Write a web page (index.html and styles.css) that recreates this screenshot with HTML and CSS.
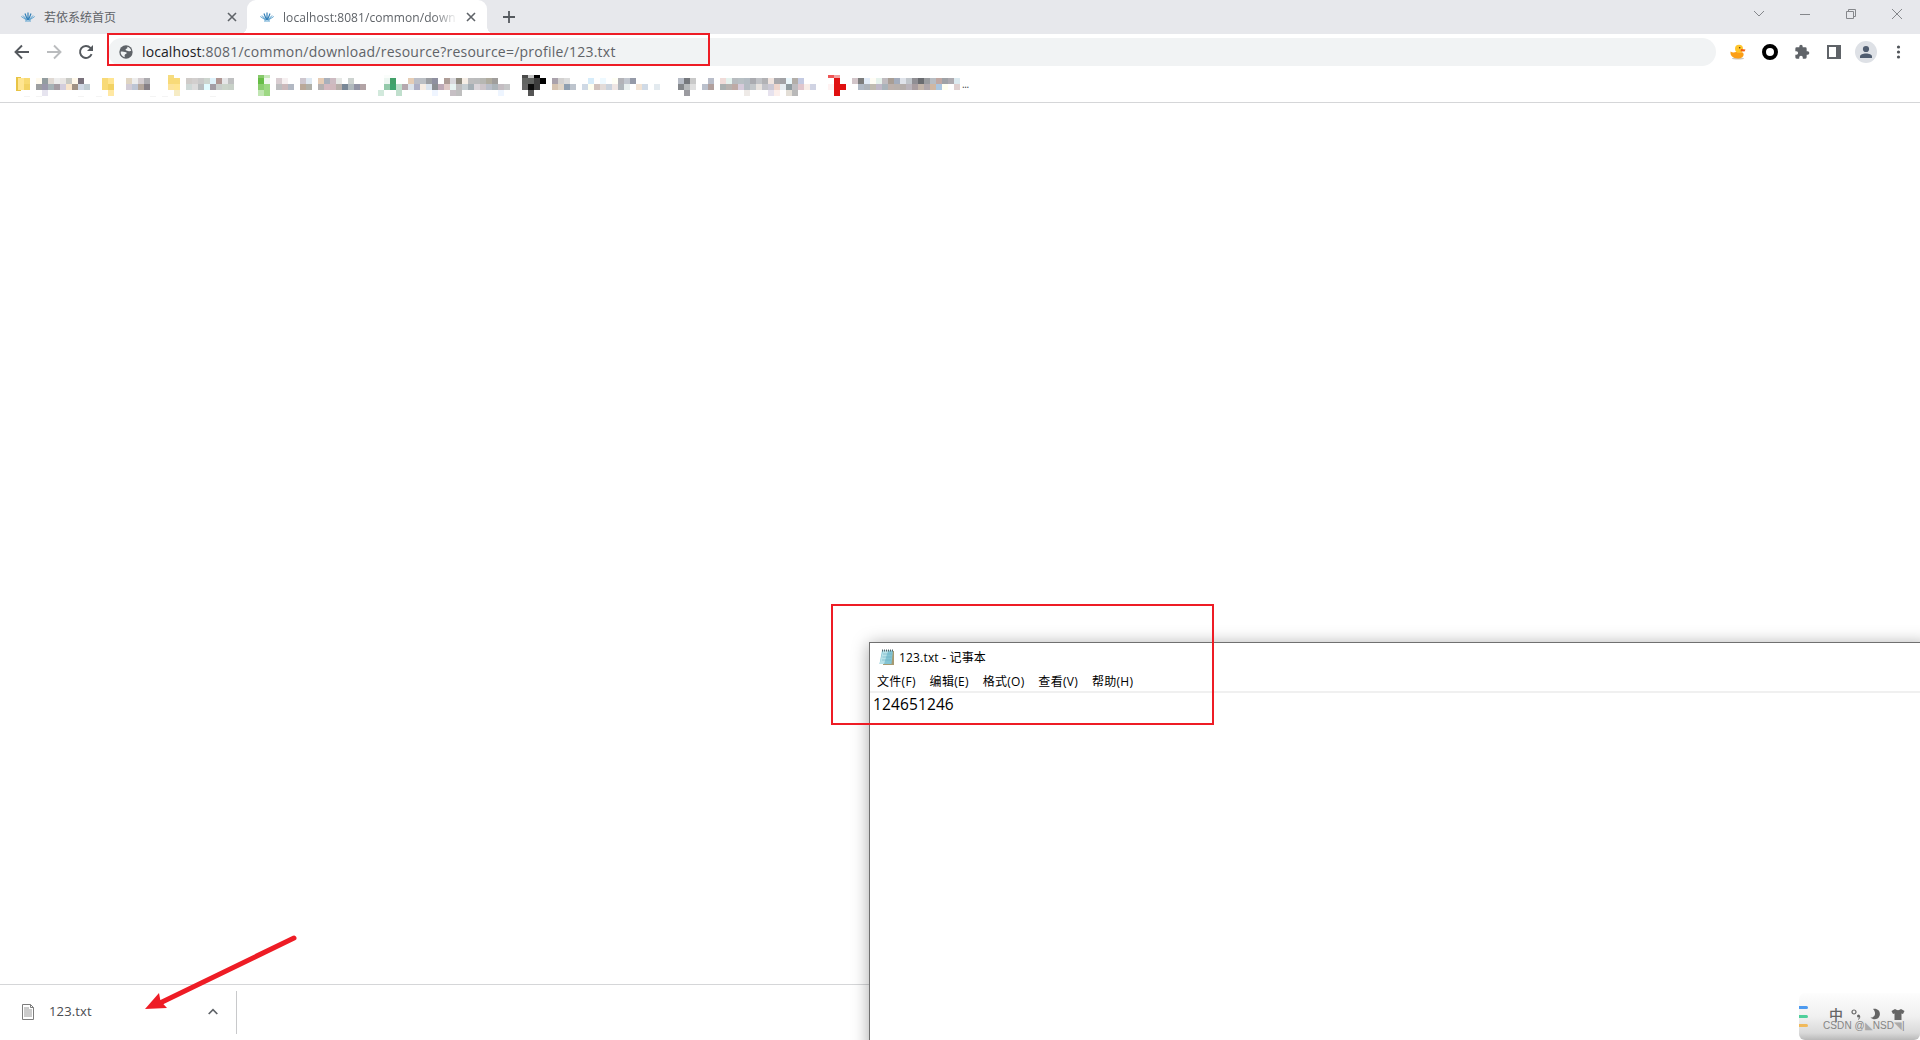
FILE: index.html
```html
<!DOCTYPE html>
<html lang="zh-CN">
<head>
  <meta charset="UTF-8" />
  <title>localhost:8081/common/download</title>
  <link rel="stylesheet" href="styles.css">
</head>
<body>
  <svg class="defs">
    <symbol id="lotus" viewBox="0 0 14 10">
      <path d="M7 .5V8M4 1.500L6.500 8M10 1.500L7.500 8" stroke="#3580b8" stroke-width="1.200"/>
      <path d="M.3 4.500L6 8.300M13.700 4.500L8 8.300M2 3.500l4 4.500M12 3.500L8 8M4 9h6" stroke="#5da2cf"/>
    </symbol>
    <symbol id="close" viewBox="0 0 10 10">
      <path d="M1 1l8 8M9 1L1 9" stroke="#5f6368" stroke-width="1.600"/>
    </symbol>
  </svg>

  <header class="tabs">
    <div class="tab">
      <svg class="favicon"><use href="#lotus"/></svg>
      <span class="tab-title">若依系统首页</span>
      <svg class="close"><use href="#close"/></svg>
    </div>
    <div class="tab active">
      <svg class="favicon"><use href="#lotus"/></svg>
      <span class="tab-title">localhost:8081/common/down</span>
      <svg class="close"><use href="#close"/></svg>
    </div>
    <svg class="new-tab" viewBox="0 0 12 12"><path d="M6 0v12M0 6h12" stroke="#55595e" stroke-width="1.800"/></svg>
    <div class="window-buttons">
      <svg viewBox="0 0 12 12"><path d="M1 3l5 5 5-5"/></svg>
      <svg viewBox="0 0 12 12"><path d="M1 6.500h10"/></svg>
      <svg viewBox="0 0 12 12"><path d="M1.500 3.500h7v7h-7zM3.500 3.500v-2h7v7h-2"/></svg>
      <svg viewBox="0 0 12 12"><path d="M1 1l10 10M11 1L1 11"/></svg>
    </div>
  </header>

  <div class="toolbar">
    <svg class="nav" viewBox="0 0 16 16"><path d="M15 8H2M8 1.500L1.500 8 8 14.500" stroke="#55595e"/></svg>
    <svg class="nav" viewBox="0 0 16 16"><path d="M1 8h13M8 1.500L14.500 8 8 14.500" stroke="#babcbe"/></svg>
    <svg class="nav" viewBox="0 0 16 16"><path d="M13.600 10.200A6 6 0 1 1 12.400 3.800L14 5.500" stroke="#55595e"/><path d="M15 1v6H9z" fill="#55595e"/></svg>
    <div class="omnibox">
      <svg class="globe" viewBox="0 0 24 24"><circle cx="12" cy="12" r="10" fill="#5f6368"/><path fill="#f1f3f4" d="M4 11.500c2.500-.5 4.500 0 6.500.5 2 .3 3 .8 2.500 2-.7 1.500-2.500 1-3 2.500-.3 1.200.3 2 0 3.200C6.500 19 3.700 15.500 4 11.500zM14 4.300c3 .8 5.200 3 5.800 6-1.500 1-3.300.8-4.800.2-1.500-.8-3.500-.5-3.700-2 0-1.500 2.200-1.200 2.700-2.200z"/></svg>
      <span class="url"><b>localhost</b>:8081/common/download/resource?resource=/profile/123.txt</span>
    </div>
    <div class="extensions">
      <svg viewBox="0 0 16 16"><ellipse cx="8" cy="14.500" rx="6" ry="1" fill="#cfc8bd"/><path fill="#fb9e16" d="M.5 7.500c2 1.500 4 1 5.500.5l6 .2c3 1 2 6-3.500 6.200C3 14.600 0 12 .5 7.500z"/><circle cx="9" cy="4.700" r="4" fill="#ffc52b"/><path fill="#f25e12" d="M11 5l4.500.5-1 2-4-.3z"/><circle cx="9.700" cy="3.700" r=".8" fill="#553516"/></svg>
      <svg viewBox="0 0 16 16"><circle cx="8" cy="8" r="6" fill="none" stroke="#000" stroke-width="4"/></svg>
      <svg viewBox="0 0 24 24"><path fill="#5f6368" d="M20.500 11H19V7a2 2 0 0 0-2-2h-4V3.500a2.500 2.500 0 0 0-5 0V5H4a2 2 0 0 0-2 2v3.800h1.500a2.700 2.700 0 0 1 0 5.400H2V20a2 2 0 0 0 2 2h3.800v-1.500a2.700 2.700 0 0 1 5.400 0V22H17a2 2 0 0 0 2-2v-4h1.500a2.500 2.500 0 0 0 0-5z"/></svg>
      <svg viewBox="0 0 16 16"><path fill="#5f6368" fill-rule="evenodd" d="M1 1h14v14H1zM3 3v10h7V3z"/></svg>
      <svg class="avatar" viewBox="0 0 22 22"><circle cx="11" cy="11" r="11" fill="#dee1e6"/><circle cx="11" cy="8" r="3.100" fill="#505d70"/><path fill="#505d70" d="M5 17v-1.500c0-4 12-4 12 0V17z"/></svg>
      <svg viewBox="0 0 16 16"><g fill="#505459"><circle cx="8.500" cy="3" r="1.600"/><circle cx="8.500" cy="8" r="1.600"/><circle cx="8.500" cy="13" r="1.600"/></g></svg>
    </div>
  </div>

  <div class="bookmarks">
    <svg id="bookmarkBar" class="mosaic" viewBox="0 72 960 25" shape-rendering="crispEdges"></svg>
    <span class="more">...</span>
  </div>

  <main class="page"></main>

  <footer class="downloads">
    <div class="download-item">
      <svg class="file" viewBox="0 0 12 16"><path d="M.5.5h8l3 3v12H.5zM8.500.5v3h3" fill="#fff" stroke="#7c7c7c"/><path d="M2 4h5M2 6h8M2 8h8M2 10h8M2 12h8" stroke="#8c8c8c" stroke-width=".9"/></svg>
      <span class="file-name">123.txt</span>
      <svg class="chevron" viewBox="0 0 10 7"><path d="M.7 6L5 1.700 9.300 6" fill="none" stroke="#5f6368" stroke-width="1.700"/></svg>
    </div>
  </footer>

  <section class="notepad">
    <div class="notepad-title">
      <svg viewBox="0 0 16 17"><path d="M4 2h11v14H4z" fill="#a69a72"/><path d="M3 1.500h11l-1.500 13.500H.5z" fill="#83c4d3"/><path d="M4 2h5L5 15H.5z" fill="#b9e2e9"/><path d="M4 5h9M3.500 8h9M3 11h9" stroke="#68afc2" stroke-width=".6"/><path d="M3 1.500h11" stroke="#54676c" stroke-width="2" stroke-dasharray="1 1"/></svg>
      <span>123.txt - 记事本</span>
    </div>
    <nav class="menu">
      <span>文件(F)</span><span>编辑(E)</span><span>格式(O)</span><span>查看(V)</span><span>帮助(H)</span>
    </nav>
    <div class="editor">124651246</div>
  </section>

  <div class="ime">
    <div class="stripes"><i class="blue"></i><i class="green"></i><i class="yellow"></i></div>
    <div class="ime-icons">
      <span class="lang">中</span>
      <svg viewBox="0 0 14 14"><circle cx="5" cy="5" r="2" fill="none" stroke="#666" stroke-width="1.200"/><circle cx="9.500" cy="9" r="1.500" fill="#666"/><path d="M10.700 9c.2 2-.5 3-1.700 3.500" fill="none" stroke="#666"/></svg>
      <svg viewBox="0 0 14 14"><path fill="#666" d="M5 2c5-1 8 3 6.500 7-1.300 3.500-6 4.500-9 1.500C7.500 11 8.500 5.500 5 2z"/></svg>
      <svg viewBox="0 0 14 14"><path fill="#666" d="M4 2c1.500 1.500 4.500 1.500 6 0l3.500 2-1.500 3-1.500-.5V13h-7V6.500L2 7 .5 4z"/></svg>
    </div>
    <span class="watermark">CSDN @<i>◣</i>NSD<i>◥</i>|</span>
  </div>

  <div class="mark mark-url"></div>
  <div class="mark mark-file"></div>
  <svg class="arrow" viewBox="0 0 160 84"><path d="M149 8L15 73" stroke="#ee1c25" stroke-width="5" stroke-linecap="round"/><path fill="#ee1c25" d="M0 79l14-16 1.500 8 6.500 7z"/></svg>

  <script>
    // [x, y, colours of consecutive 6px cells]
    const cells = [
      [18, 78, 'ffe591 f8da72'], [18, 84, 'ffe591 f2d264'],
      [36, 78, 'fffaee 939da0 e0d9d3 ededed e9e6e4 c8c9c4 fff8ea 7a727c'],
      [36, 84, '9d9fa1 9a98aa a6b2b6 a49ca3 d3cddc f9e5cb a09183 d0d8e4 c0ccd2'],
      [42, 90, 'e6e4ef'],
      [102, 78, 'f8da78 ffe591'], [102, 84, 'f8da78 f2d264'], [108, 90, 'ffe8a3'],
      [126, 78, 'e0d5c2 ededed d4cdd0 adacb0'], [126, 84, 'd2ccd6 bdc5d4 b4a79c 868086'],
      [168, 72, 'f5dc80'], [168, 78, 'f8da78 f8da78'], [168, 84, 'fde39a ffe591'], [174, 90, 'f6ecc5'],
      [186, 78, 'cfcbc8 d2cfce c9c9c9 cdd5cf dff2fb b09794 e6e6e8 bfc0c1'],
      [186, 84, 'ced8d6 dcdcdc b8bcbe e1fbff a29ca4 c8cdcb cbd4ca c8d1c8'],
      [258, 72, '87c96b c8e8bc'], [258, 78, '66bd45 f0f7ee'], [258, 84, '8bce6f 9dd883'], [258, 90, 'c0e5b2 9dd883'],
      [276, 78, 'd9cdd1 f6f0f1'], [276, 84, 'bdbdbf cbb9bb b2b8c3'],
      [300, 78, 'cec7cf dfe9f2'], [300, 84, 'b9a898 b0b0a8'],
      [318, 78, 'e6ccb5 a9b0bb cdbbc2 e6e8e6 - cdd3d0'],
      [318, 84, 'b5b1b0 d3b8bf d0b8bd b7aea9 788796 b0b9bd 9294a5 b2a3a5'],
      [384, 72, 'fafdfb fafdfb'], [384, 78, 'ecf6f1 42a069'], [384, 84, '93c9aa 3fa46e c0dfcd'], [378, 90, 'd2e9dc - - c0dfcd'],
      [408, 78, 'e5cdb6 bcbfc8 bbbfc4 9c9ea2 8f90a0 - ae9d97 d8d8dc 8f8c81 f6eee6 bdbdbe bbbcbd b7b7b3 b0ac9f a09e9c'],
      [402, 84, 'b5a8ae dde4eb aeb0c6 f7ede4 dce5ef 8c8f93 bda9b6 dfc9c6 e6f3f1 bdbdbe c6ced2 a5afb5 dad5da cdc5ca b9bec9 acb4b9 c4bdc2 c6c7c8'],
      [432, 90, 'eff5ff - - c6bfc4 bfbfbf - - - - - - eef5ff'],
      [522, 72, '4a4a4a c5c5c5 000'], [522, 78, '626462 5f615f 3c3c3c 000'], [522, 84, '666 0a0a0a 3c3c3c'], [528, 90, '555'],
      [552, 78, 'aaa2ac d3d1d0 dcdcdc - - - d6ecfa - eef9ff - fffff5 b3b3b8 c2c7cf 959aa8'],
      [552, 84, 'd6c4b2 e0d5c7 8f9fb0 bdc4cd - cfd9e5 fffff0 d1c3be e3dbd8 cbd3dd efe6e3 b0b6bb e9f0ef - f2e3d4 d0dae6 - e3eaef'],
      [678, 78, 'b7bcc6 75787d c9c9c9'], [678, 84, '84878b b6b9bb dfdfdf'], [684, 90, '9b9ba0'],
      [708, 78, 'b9bdc9'], [702, 84, 'bac0cc b1a09d'],
      [720, 78, 'f0dcd9 e5f2ee b8bcc0 b8c0c4 b4bcc3 aaabb0 c1c3c7 b2b2b5 f0e4df a9a8ac a2a2a6 eaf7fc b3aea9 c4cae2'],
      [720, 84, 'aab0b0 b7b2af beaaa5 d6cbdb b5bcc3 c3c7ca e8e3df c3c3c9 cbc8d4 efd5cc e6edf2 8f9ba0 bdbcc0 e0c6cc f8ede7 d0d3e3'],
      [744, 90, 'eeeae7 - - - e6e2ee fcefeb - e3ded6 b9b9b9'],
      [828, 72, 'ef5555 f4a0a0'], [834, 78, 'e01010'], [828, 84, 'fff2f2 e01010 e01010'], [834, 90, 'e01010'],
      [852, 78, 'd2c5c9 7c7c7c e2ecf8 fffdf5 e6f2ec c0bcc0 a99e95 a4adbd dfe3ea c1c6cb 908f94 6a6c70 9a9ca0 b8bdc3 c0a8a2 9fa2a6 adaaaf dceaf0'],
      [858, 84, 'b0b9c5 aeb4bb c0bbb0 c0b9c8 a9b3ba bdb1ac b9b1ad b5aeab bab4bb a89da0 c2b4a9 b0a7ab d0b7a2 abc6df fffff0 - dfd0d0'],
      [24, 96, 'f4f4f4 - f4f4f4 - - - - - - f4f4f4 - - f4f4f4 - - - - - - - - f4f4f4 - f4f4f4 - - - - - - - f4f4f4']
    ];

    let rects = '<path fill="#e8c445" d="M16 77h5v1h-3v12h3v1h-5z"/>';
    cells.forEach(([x, y, row]) => {
      row.split(' ').forEach((color, i) => {
        if (color === '-') return;
        const top = Math.max(y, 75);
        rects += `<rect x="${x + i * 6}" y="${top}" width="6" height="${y + 6 - top}" fill="#${color}"/>`;
      });
    });
    document.getElementById('bookmarkBar').innerHTML = rects;
  </script>
</body>
</html>
```
FILE: styles.css
```css
* { margin: 0; padding: 0; box-sizing: border-box; }

body {
  width: 1920px;
  height: 1040px;
  display: flex;
  flex-direction: column;
  position: relative;
  overflow: hidden;
  background: #fff;
  color: #5f6368;
  font-family: "Open Sans", "Noto Sans CJK SC", sans-serif;
  font-size: 12px;
}

svg { display: block; flex: none; fill: none; }
.defs { position: absolute; width: 0; height: 0; }

/* tab strip */
.tabs { display: flex; height: 34px; flex: none; background: #e7e8ec; }

.tab {
  display: flex;
  align-items: center;
  width: 240px;
  padding: 0 11px 0 14px;
}

.tab:first-child { width: 247px; padding: 0 10px 0 21px; }

.tab.active {
  position: relative;
  background: #fff;
  border-radius: 9px 9px 0 0;
  padding-left: 13px;
}

/* curved feet of the active tab */
.tab.active::before,
.tab.active::after {
  content: "";
  position: absolute;
  bottom: 0;
  width: 7px;
  height: 7px;
}

.tab.active::before { left: -7px; background: radial-gradient(circle at 0 0, transparent 6.5px, #fff 7px); }
.tab.active::after { right: -7px; background: radial-gradient(circle at 100% 0, transparent 6.5px, #fff 7px); }

.favicon { width: 14px; height: 10px; margin-right: 9px; }

.tab-title { flex: 1; white-space: nowrap; overflow: hidden; }

.active .tab-title {
  margin-right: 8px;
  letter-spacing: 0.08px;
  -webkit-mask-image: linear-gradient(to right, #000 86%, transparent);
  mask-image: linear-gradient(to right, #000 86%, transparent);
}

.close { width: 10px; height: 10px; }
.new-tab { width: 12px; height: 12px; margin: 11px 0 0 16px; }

.window-buttons { display: flex; gap: 34px; margin: 8px 17px 0 auto; }
.window-buttons svg { width: 12px; height: 12px; stroke: #85878b; }

/* address bar */
.toolbar {
  display: flex;
  align-items: center;
  height: 36px;
  flex: none;
  padding-left: 14px;
}

.nav { width: 16px; height: 16px; margin-right: 16px; stroke-width: 1.900; }

.omnibox {
  display: flex;
  align-items: center;
  width: 1608px;
  height: 28px;
  margin-left: -2px;
  padding-left: 10px;
  border-radius: 14px;
  background: #f1f3f4;
}

.globe { width: 16px; height: 16px; margin-right: 8px; }
.url { padding-bottom: 2px; font-size: 14px; letter-spacing: 0.24px; white-space: nowrap; }
.url b { font-weight: normal; letter-spacing: 0.1px; color: #202124; }

.extensions { display: flex; align-items: center; gap: 16px; margin-left: 14px; }
.extensions svg { width: 16px; height: 16px; }
.extensions .avatar { width: 22px; height: 22px; margin: 0 -3px; }

/* bookmarks */
.bookmarks {
  display: flex;
  height: 33px;
  flex: none;
  padding-top: 2px;
  border-bottom: 1px solid #d5d6d8;
}

.mosaic { width: 960px; height: 25px; }
.more { margin-left: 2px; font-size: 10px; line-height: 24px; letter-spacing: -0.4px; color: #3c4043; }

.page { flex: 1; }

/* download shelf */
.downloads {
  height: 56px;
  flex: none;
  padding-top: 6px;
  border-top: 1px solid #d5d6d8;
}

.download-item {
  display: flex;
  align-items: center;
  width: 237px;
  height: 43px;
  padding: 0 18px 0 22px;
  border-right: 1px solid #c8c9cb;
}

.file { width: 12px; height: 16px; margin-bottom: 1px; }
.file-name { flex: 1; margin-left: 15px; padding-bottom: 3px; font-size: 13px; letter-spacing: 0.15px; color: #4a4d51; }
.chevron { width: 10px; height: 7px; margin-bottom: 2px; }

/* notepad window */
.notepad {
  position: absolute;
  left: 869px;
  top: 642px;
  width: 1060px;
  height: 410px;
  border: 1px solid #707070;
  background: #fff;
  box-shadow: 0 2px 16px rgba(0, 0, 0, 0.35);
  color: #000;
}

.notepad-title { display: flex; align-items: center; height: 28px; padding-left: 9px; letter-spacing: 0.18px; }
.notepad-title svg { width: 16px; height: 17px; margin-right: 4px; }

.menu {
  display: flex;
  gap: 13.800px;
  height: 22px;
  padding-left: 7px;
  line-height: 22px;
  letter-spacing: 0.3px;
  border-bottom: 2px solid #f0f0f0;
}

.editor { padding-left: 3px; font-size: 15.500px; line-height: 22px; letter-spacing: 0.12px; }

/* input method bar */
.ime {
  position: absolute;
  left: 1799px;
  top: 993px;
  width: 121px;
  height: 47px;
  border-radius: 6px 0 6px 6px;
  background: linear-gradient(#fdfdfd, #f0f0f0 50%, #d9d9d9 85%, #b9b9b9);
}

.stripes {
  display: flex;
  flex-direction: column;
  gap: 6px;
  width: 9px;
  padding-top: 13px;
}

.stripes i { height: 3px; border-radius: 0 2px 2px 0; }
.blue { background: #4d9af0; }
.green { background: #4fcf9b; }
.yellow { background: #f0b95b; }

.ime-icons {
  position: absolute;
  left: 30px;
  top: 14px;
  display: flex;
  align-items: center;
  gap: 6px;
}

.ime-icons svg { width: 14px; height: 14px; }
.ime-icons svg:nth-of-type(2) { margin-left: -1px; }
.ime-icons svg:nth-of-type(3) { margin-left: 3px; }
.lang { font-size: 14px; line-height: 13px; font-weight: 500; color: #666; }

.watermark {
  position: absolute;
  left: 24px;
  top: 27px;
  font: 10px/11px "Liberation Sans", "DejaVu Sans", sans-serif;
  letter-spacing: 0.1px;
  white-space: nowrap;
  color: #858585;
}

.watermark i { font-style: normal; color: #aaa; }

/* red annotations */
.mark { position: absolute; border: 2px solid #ee1c25; }
.mark-url { left: 107px; top: 33px; width: 603px; height: 33px; }
.mark-file { left: 831px; top: 604px; width: 383px; height: 121px; }
.arrow { position: absolute; left: 145px; top: 930px; width: 160px; height: 84px; }
```
